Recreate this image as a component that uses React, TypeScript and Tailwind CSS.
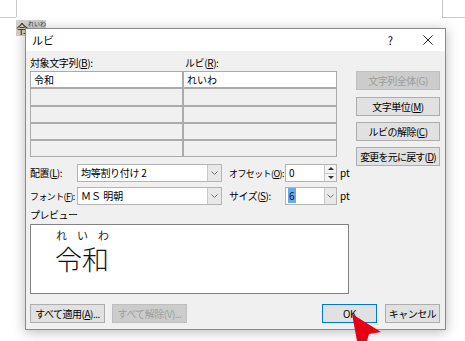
import React from 'react';

const Chevron: React.FC = () => (
  <svg width="7" height="4" viewBox="0 0 7 4" className="block">
    <path d="M0.5 0.5 L3.5 3.5 L6.5 0.5" fill="none" stroke="#707070" strokeWidth="1" />
  </svg>
);

const Btn: React.FC<{ label: React.ReactNode; w: string; disabled?: boolean; focused?: boolean; className?: string }> = ({
  label,
  w,
  disabled,
  focused,
  className = '',
}) => (
  <div
    className={`h-[19px] ${w} flex items-center justify-center border text-[10px] leading-none whitespace-nowrap tracking-[-0.5px] ${
      disabled
        ? 'bg-[#cccccc] border-[#bfbfbf] text-[#9d9d9d]'
        : focused
        ? 'bg-[#e1e1e1] border-[#0078d7] text-black'
        : 'bg-[#e1e1e1] border-[#adadad] text-black'
    } ${className}`}
  >
    {label}
  </div>
);

const Cell: React.FC<{ text?: string; w: string; white?: boolean; h: string }> = ({ text, w, white, h }) => (
  <div
    className={`${w} ${h} border border-[#ababab] flex items-center pl-[3px] text-[10px] leading-none ${
      white ? 'bg-white' : 'bg-[#f0f0f0]'
    }`}
  >
    {text}
  </div>
);

export default function App() {
  const rows = ['h-[17px]', 'h-[18px]', 'h-[17px]', 'h-[17px]', 'h-[17px]'];

  return (
    <div className="relative w-[465px] h-[341px] bg-white overflow-hidden font-['Noto_Sans_CJK_JP','Noto_Sans',sans-serif] text-black">
      {/* page corner marks */}
      <div className="absolute left-[16px] top-0 w-px h-[17px] bg-[#c8c8c8]" />
      <div className="absolute left-0 top-[17px] w-[16px] h-px bg-[#c8c8c8]" />
      <div className="absolute left-[442px] top-0 w-px h-[17px] bg-[#c8c8c8]" />
      <div className="absolute left-[442px] top-[17px] w-[23px] h-px bg-[#c8c8c8]" />

      {/* selected word in document */}
      <div className="absolute left-[16px] top-[20px] w-[30px] h-[16px] bg-[#cfcfcf]">
        <span className="absolute left-[12px] top-[1px] text-[6px] leading-none text-[#333] whitespace-nowrap">れいわ</span>
        <span className="absolute left-0 top-[3px] text-[12px] leading-none text-[#222]">令</span>
      </div>

      {/* dialog */}
      <div className="absolute left-[25px] top-[28px] w-[421px] h-[302px] flex flex-col border border-[#8a8a8a] shadow-[0_2px_12px_rgba(0,0,0,0.28)]">
        <div className="h-[22px] bg-white flex items-center pl-[6px] text-[11px] leading-none">
          <span>ルビ</span>
          <span className="ml-auto mr-[30px] text-[11px]">?</span>
          <svg width="10" height="10" viewBox="0 0 10 10" className="mr-[12px]">
            <path d="M0.5 0.5 L9.5 9.5 M9.5 0.5 L0.5 9.5" stroke="#222" strokeWidth="1" />
          </svg>
        </div>

        <div className="flex-1 bg-[#f0f0f0] pl-[4px] pr-[5px] pt-[4px] pb-[6px] flex flex-col">
          <div className="flex">
            {/* left column */}
            <div className="w-[320px] flex flex-col">
              <div className="h-[16px] flex items-center text-[10px] leading-none whitespace-nowrap tracking-[-0.4px]">
                <span className="w-[155px]">
                  対象文字列(<u>B</u>):
                </span>
                <span>
                  ルビ(<u>R</u>):
                </span>
              </div>

              <div className="w-[307px] flex flex-col">
                {rows.map((h, i) => (
                  <div key={i} className="flex">
                    <Cell w="w-[153px]" h={h} white={i === 0} text={i === 0 ? '令和' : ''} />
                    <Cell w="w-[154px]" h={h} white={i === 0} text={i === 0 ? 'れいわ' : ''} />
                  </div>
                ))}
              </div>

              <div className="mt-[7px] h-[18px] flex items-center text-[10px] leading-none whitespace-nowrap">
                <span className="w-[47px] tracking-[-0.5px]">
                  配置(<u>L</u>):
                </span>
                <div className="w-[145px] h-[18px] bg-white border border-[#b4b4b4] flex items-center">
                  <span className="pl-[3px] flex-1 tracking-[-0.3px]">均等割り付け 2</span>
                  <div className="w-[14px] h-full bg-[#e8e8e8] border-l border-[#c8c8c8] flex items-center justify-center">
                    <Chevron />
                  </div>
                </div>
                <span className="ml-[7px] w-[56px] text-[9px] tracking-[-0.6px]">
                  オフセット(<u>O</u>):
                </span>
                <div className="w-[52px] h-[18px] bg-white border border-[#b4b4b4] flex items-center">
                  <span className="pl-[3px] flex-1">0</span>
                  <div className="w-[12px] h-full border-l border-[#c8c8c8] bg-[#f4f4f4] flex flex-col">
                    <div className="flex-1 flex items-center justify-center border-b border-[#c8c8c8]">
                      <svg width="6" height="3" viewBox="0 0 6 3">
                        <path d="M0 3 L3 0 L6 3 Z" fill="#333" />
                      </svg>
                    </div>
                    <div className="flex-1 flex items-center justify-center">
                      <svg width="6" height="3" viewBox="0 0 6 3">
                        <path d="M0 0 L6 0 L3 3 Z" fill="#333" />
                      </svg>
                    </div>
                  </div>
                </div>
                <span className="ml-[3px]">pt</span>
              </div>

              <div className="mt-[5px] h-[18px] flex items-center text-[10px] leading-none whitespace-nowrap">
                <span className="w-[47px] text-[9px] tracking-[-0.6px]">
                  フォント(<u>F</u>):
                </span>
                <div className="w-[145px] h-[18px] bg-white border border-[#b4b4b4] flex items-center">
                  <span className="pl-[3px] flex-1">ＭＳ 明朝</span>
                  <div className="w-[14px] h-full bg-[#e8e8e8] border-l border-[#c8c8c8] flex items-center justify-center">
                    <Chevron />
                  </div>
                </div>
                <span className="ml-[7px] w-[56px] tracking-[-0.5px]">
                  サイズ(<u>S</u>):
                </span>
                <div className="w-[52px] h-[18px] bg-white border border-[#b4b4b4] flex items-center">
                  <div className="flex-1 pl-[2px]">
                    <span className="bg-[#6aa8e8] px-px text-[#0b1a2e]">6</span>
                  </div>
                  <div className="w-[12px] h-full bg-[#e8e8e8] border-l border-[#c8c8c8] flex items-center justify-center">
                    <Chevron />
                  </div>
                </div>
                <span className="ml-[3px]">pt</span>
              </div>

              <div className="mt-[2px] h-[16px] flex items-center text-[10px] leading-none tracking-[-0.5px]">プレビュー</div>

              <div className="mt-[1px] w-[319px] h-[70px] bg-white border border-[#828282] pl-[24px] pt-[5px] flex flex-col">
                <div className="w-[55px] h-[12px] flex justify-between text-[11px] leading-none text-[#222] px-[1px]">
                  <span>れ</span>
                  <span>い</span>
                  <span>わ</span>
                </div>
                <div className="mt-[3px] text-[27px] leading-none text-[#111] font-light whitespace-nowrap">令和</div>
              </div>
            </div>

            {/* right column */}
            <div className="ml-[6px] w-[84px] pt-[16px] flex flex-col">
              <Btn w="w-[84px]" disabled label={<span>文字列全体(G)</span>} />
              <Btn w="w-[84px]" className="mt-[7px]" label={<span>文字単位(<u>M</u>)</span>} />
              <Btn w="w-[84px]" className="mt-[6px]" label={<span>ルビの解除(<u>C</u>)</span>} />
              <Btn
                w="w-[84px]"
                className="mt-[6px]"
                label={
                  <span className="tracking-[-0.8px]">
                    変更を元に戻す(<u>D</u>)
                  </span>
                }
              />
            </div>
          </div>

          <div className="mt-[10px] flex">
            <Btn w="w-[75px]" label={<span>すべて適用(<u>A</u>)...</span>} />
            <Btn w="w-[75px]" className="ml-[7px]" disabled label={<span>すべて解除(V)...</span>} />
            <Btn w="w-[55px]" className="ml-auto" focused label="OK" />
            <Btn w="w-[55px]" className="ml-[8px]" label="キャンセル" />
          </div>
        </div>
      </div>

      {/* red pointer */}
      <svg className="absolute left-0 top-0" width="465" height="341" viewBox="0 0 465 341">
        <path d="M352 314 L381 332 L369 334 L367 341 L357 341 Z" fill="#e60012" />
      </svg>
    </div>
  );
}
